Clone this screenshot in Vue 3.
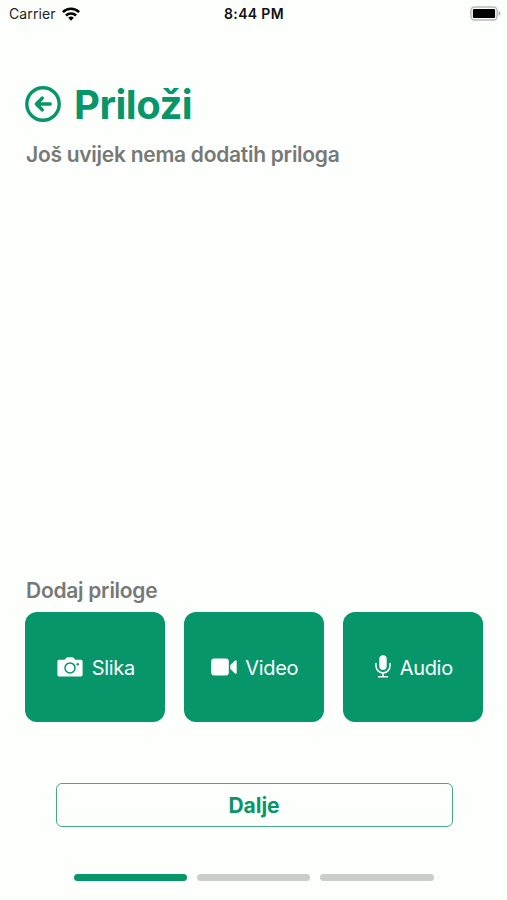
<script setup>
import { ref } from 'vue'

const attachments = [
  { kind: 'photo', label: 'Slika' },
  { kind: 'video', label: 'Video' },
  { kind: 'audio', label: 'Audio' },
]
const steps = 3
const current = ref(1)
</script>

<template>
  <main class="screen">
    <header class="status">
      <div class="carrier">
        <span>Carrier</span>
        <svg class="wifi" viewBox="0 0 18 14" fill="none" stroke="#000" stroke-width="2.5">
          <path d="M.9 5.1a11.6 11.6 0 0 1 16.2 0" />
          <path d="M3.9 8.5a7.4 7.4 0 0 1 10.2 0" />
          <path d="M9 13.7 6.2 10.8a4.1 4.1 0 0 1 5.6 0z" fill="#000" stroke="none" />
        </svg>
      </div>
      <time class="time">8:44 PM</time>
      <svg class="battery" viewBox="0 0 31 15">
        <rect x=".9" y=".9" width="26.2" height="13" rx="3.6" fill="#fff" stroke="#b9b9b9" stroke-width="1.5" />
        <rect x="2.9" y="2.9" width="22.2" height="9" rx="1" fill="#000" />
        <path d="M28.5 5c1.6.5 2 1.5 2 2.4s-.4 1.9-2 2.4z" fill="#b5b5b5" />
      </svg>
    </header>

    <section class="heading">
      <button class="back" aria-label="Nazad">
        <svg viewBox="0 0 36 36" fill="none" stroke="#069669" stroke-linecap="round" stroke-linejoin="round">
          <circle cx="18" cy="18" r="16.2" stroke-width="3.4" />
          <path d="M25.2 18H11.5M17.2 12.200 11.400 18l5.800 5.800" stroke-width="3.500" />
        </svg>
      </button>
      <h1>Priloži</h1>
    </section>
    <p class="empty">Još uvijek nema dodatih priloga</p>

    <section class="add">
      <h2>Dodaj priloge</h2>
      <div class="cards">
        <button v-for="item in attachments" :key="item.kind" class="card" :class="item.kind">
          <svg v-if="item.kind === 'photo'" viewBox="0 0 26 20">
            <path d="M2 2.700h5.700L9.400.8Q9.900.2 10.700.2h4.600q.8 0 1.300.6l1.700 1.900H24q1.600 0 1.600 1.700v13.400q0 1.800-1.700 1.800H2.100Q.4 19.600.4 17.800V4.400Q.4 2.700 2 2.700z" fill="#fff" />
            <circle cx="13" cy="10.900" r="5" fill="none" stroke="#069669" stroke-width="1.500" />
            <circle cx="20.700" cy="7.200" r="1.200" fill="#069669" />
          </svg>
          <svg v-else-if="item.kind === 'video'" viewBox="0 0 26 18">
            <rect x=".2" y=".5" width="17.600" height="17" rx="3" fill="#fff" />
            <path d="M19.300 7.100 23.800 2.700Q25.700 1.400 25.700 3.400v11.200q0 2-1.900.7l-4.500-4.400z" fill="#fff" />
          </svg>
          <svg v-else viewBox="0 0 16 23" fill="none" stroke="#fff" stroke-width="1.500" stroke-linecap="round">
            <rect x="4.300" y=".3" width="7.400" height="14.700" rx="3.700" fill="#fff" stroke="none" />
            <path d="M1 8.500v2.400a7 7 0 0 0 14 0V8.500M8 18v3.600M3.500 21.800h9" />
          </svg>
          <span>{{ item.label }}</span>
        </button>
      </div>
    </section>

    <button class="next"><span>Dalje</span></button>

    <nav class="progress">
      <i v-for="n in steps" :key="n" :class="{ active: n === current }"></i>
    </nav>
  </main>
</template>

<style>
body {
  background: #fdfffd;
}
</style>

<style scoped>
.screen {
  box-sizing: border-box;
  width: 507px;
  height: 900px;
  overflow: hidden;
  display: flex;
  flex-direction: column;
  background: #fdfffd;
  font-family: Inter, "Liberation Sans", sans-serif;
}

button {
  box-sizing: border-box;
  padding: 0;
  border: 0;
  background: none;
  font: inherit;
}

h1, h2, p {
  margin: 0;
}

svg {
  display: block;
  flex: none;
}

.status {
  display: grid;
  grid-template-columns: 1fr auto 1fr;
  align-items: center;
  height: 27px;
  padding: 0 6px 0 9px;
  font-size: 14px;
  color: #222;
}

.carrier {
  display: flex;
  align-items: center;
  gap: 6px;
  letter-spacing: 0.1px;
}

.wifi {
  width: 18px;
  height: 14px;
}

.time {
  margin-right: 2px;
  font-weight: 600;
  letter-spacing: 0.35px;
  color: #111;
}

.battery {
  width: 31px;
  height: 15px;
  justify-self: end;
}

.heading {
  display: flex;
  align-items: center;
  gap: 13px;
  height: 48px;
  margin: 53px 0 0 25px;
}

.back svg {
  width: 36px;
  height: 36px;
}

h1 {
  padding-top: 1px;
  font-size: 40px;
  line-height: 48px;
  font-weight: 700;
  letter-spacing: -0.5px;
  color: #069669;
}

.empty, h2 {
  font-size: 21px;
  line-height: 28px;
  font-weight: 600;
  letter-spacing: -0.27px;
  color: #777977;
}

.empty {
  margin: 13px 0 0 26px;
}

.add {
  margin: 408px 24.5px 0 25px;
}

h2 {
  padding-left: 1px;
}

.cards {
  display: grid;
  grid-template-columns: repeat(3, 1fr);
  gap: 19.5px;
  margin-top: 7px;
}

.card {
  display: flex;
  align-items: center;
  justify-content: center;
  gap: 9px;
  height: 109.5px;
  padding-left: 2px;
  border-radius: 12px;
  background: #069669;
  color: #fff;
  font-size: 20px;
  line-height: 26px;
  letter-spacing: -0.3px;
}

.card span {
  padding-top: 2px;
}

.photo svg {
  width: 26px;
  height: 20px;
}

.video {
  gap: 8px;
}

.video svg {
  width: 26px;
  height: 18px;
}

.audio svg {
  width: 16px;
  height: 23px;
}

.next {
  width: 397px;
  height: 44px;
  margin: 61px 0 0 55.5px;
  padding-top: 1px;
  border: 1.5px solid #47a787;
  border-radius: 6px;
  font-size: 21px;
  font-weight: 700;
  color: #069669;
}

.progress {
  display: flex;
  gap: 10px;
  margin: 47.5px 0 0 74px;
}

.progress i {
  width: 113.2px;
  height: 6.5px;
  border-radius: 4px;
  background: #cbcdcb;
}

.progress .active {
  background: #069669;
}
</style>
